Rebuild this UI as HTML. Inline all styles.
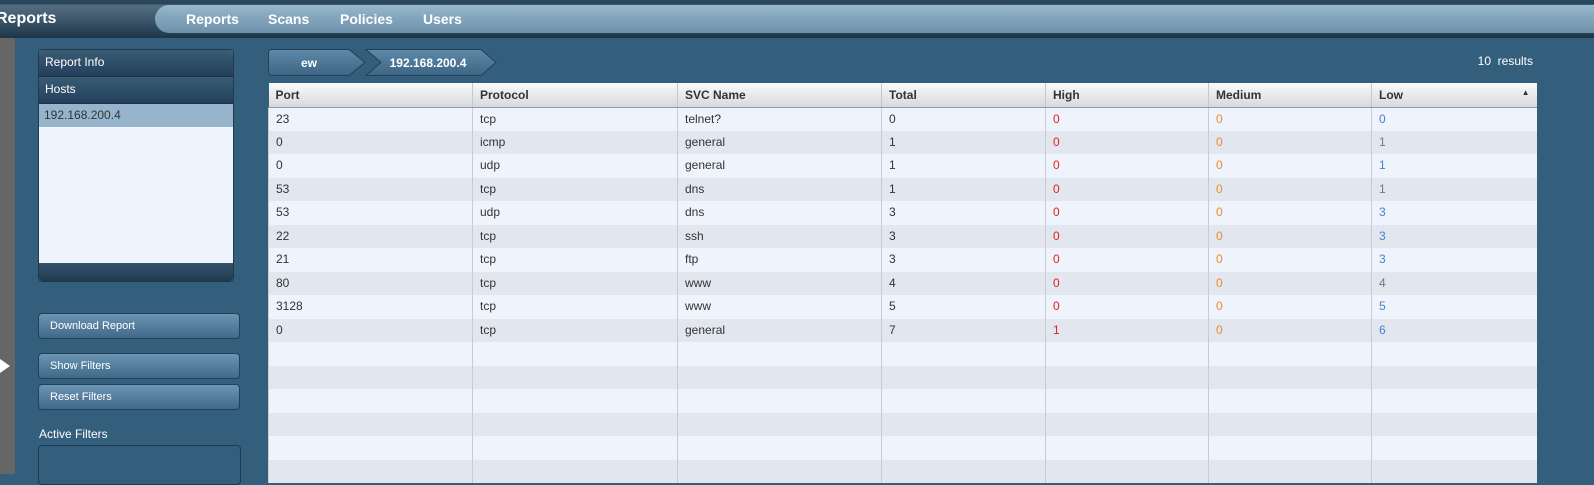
<!DOCTYPE html>
<html><head><style>
*{margin:0;padding:0;box-sizing:border-box}
body{width:1594px;height:474px;overflow:hidden;background:#335f7d;font-family:"Liberation Sans",sans-serif;position:relative}
.top{position:absolute;left:0;top:0;width:1594px;height:38px;background:linear-gradient(#2a465b 0,#2a465b 4px,#566e82 5px,#3c566b 20px,#243d50 34px,#1f3446 38px)}
.title{position:absolute;left:-4px;top:10px;color:#fff;font-weight:bold;font-size:16px}
.nav{position:absolute;left:155px;top:5px;width:1450px;height:28px;border-radius:15px 0 0 15px;background:linear-gradient(#97b7cc,#6d91aa)}
.nav span{position:absolute;top:6px;color:#fff;font-weight:bold;font-size:14px}
.strip{position:absolute;left:0;top:38px;width:15px;height:436px;background:#666}
.arrow{position:absolute;left:0;top:359px;width:0;height:0;border-top:7px solid transparent;border-bottom:7px solid transparent;border-left:10px solid #fff}
.panel{position:absolute;left:38px;top:49px;width:196px;height:233px;border:1px solid #1f3a4e;border-radius:4px;background:#eef3fc;overflow:hidden}
.ph{height:27px;background:linear-gradient(#3a5c75,#23405a);color:#fff;font-size:12px;padding:5px 6px;border-bottom:1px solid #1c3346}
.sel{height:23px;background:#96b5cd;color:#333;font-size:12px;padding:4px 5px}
.pf{position:absolute;left:0;bottom:0;width:100%;height:18px;background:linear-gradient(#33536b,#1f3a4e)}
.btn{position:absolute;left:38px;width:202px;height:26px;border:1px solid #234055;border-radius:4px;background:linear-gradient(#6b95b4,#41698a);color:#fff;font-size:11px;padding:6px 11px}
.af{position:absolute;left:39px;top:427px;color:#fff;font-size:12px}
.afb{position:absolute;left:38px;top:445px;width:203px;height:40px;border:1px solid #1f3a4e;border-radius:4px}
.res{position:absolute;right:61px;top:54px;color:#fff;font-size:12px}
table{position:absolute;left:268px;top:83px;width:1268px;border-collapse:collapse;table-layout:fixed;font-size:12px;color:#333}
th{height:24px;text-align:left;font-weight:bold;padding:0 7px;background:linear-gradient(#fafafa,#d6d9de);border-left:1px solid #c4c8cc;border-bottom:1px solid #8e9aa6;color:#333}
td{height:23.5px;padding:0 7px;border-left:1px solid #c8ccd0;vertical-align:top;padding-top:3px;line-height:16px}
tr:nth-child(even) td{background:#eef3fc}
tr:nth-child(odd) td{background:#e1e6ef}
.h{color:#d22}.m{color:#e98d2a}.l{color:#4a7fd0}.g{color:#6b7a8a}
</style></head><body>
<div class="top"><div class="title">Reports</div>
<div class="nav"><span style="left:31px">Reports</span><span style="left:113px">Scans</span><span style="left:185px">Policies</span><span style="left:268px">Users</span></div></div>
<div class="strip"></div><div class="arrow"></div>
<div class="panel"><div class="ph">Report Info</div><div class="ph" style="height:27px">Hosts</div><div class="sel">192.168.200.4</div><div class="pf"></div></div>
<div class="btn" style="top:313px">Download Report</div>
<div class="btn" style="top:353px">Show Filters</div>
<div class="btn" style="top:384px">Reset Filters</div>
<div class="af">Active Filters</div><div class="afb"></div>
<svg style="position:absolute;left:268px;top:49px" width="230" height="28">
<path d="M4 .5H81L97 13.5L81 26.5H4Q.5 26.5 .5 23V4Q.5 .5 4 .5Z" fill="url(#g)" stroke="#234055"/>
<path d="M98 .5H213L228 13.5L213 26.5H98L113 13.5Z" fill="url(#g)" stroke="#234055"/>
<defs><linearGradient id="g" x1="0" y1="0" x2="0" y2="1"><stop offset="0" stop-color="#5f89a8"/><stop offset="1" stop-color="#3d6586"/></linearGradient></defs>
<text x="41" y="18" fill="#fff" font-weight="bold" font-size="12" text-anchor="middle" font-family="Liberation Sans">ew</text>
<text x="160" y="18" fill="#fff" font-weight="bold" font-size="12" text-anchor="middle" font-family="Liberation Sans">192.168.200.4</text>
</svg>
<div class="res">10&nbsp; results</div>
<table>
<colgroup><col style="width:204px"><col style="width:205px"><col style="width:204px"><col style="width:164px"><col style="width:163px"><col style="width:163px"><col style="width:165px"></colgroup>
<tr><th style="border-left:none">Port</th><th>Protocol</th><th>SVC Name</th><th>Total</th><th>High</th><th>Medium</th><th>Low<span style="float:right;font-size:8px">▲</span></th></tr>
<tr><td>23</td><td>tcp</td><td>telnet?</td><td>0</td><td class="h">0</td><td class="m">0</td><td class="l">0</td></tr>
<tr><td>0</td><td>icmp</td><td>general</td><td>1</td><td class="h">0</td><td class="m">0</td><td class="g">1</td></tr>
<tr><td>0</td><td>udp</td><td>general</td><td>1</td><td class="h">0</td><td class="m">0</td><td class="l">1</td></tr>
<tr><td>53</td><td>tcp</td><td>dns</td><td>1</td><td class="h">0</td><td class="m">0</td><td class="g">1</td></tr>
<tr><td>53</td><td>udp</td><td>dns</td><td>3</td><td class="h">0</td><td class="m">0</td><td class="l">3</td></tr>
<tr><td>22</td><td>tcp</td><td>ssh</td><td>3</td><td class="h">0</td><td class="m">0</td><td class="l">3</td></tr>
<tr><td>21</td><td>tcp</td><td>ftp</td><td>3</td><td class="h">0</td><td class="m">0</td><td class="l">3</td></tr>
<tr><td>80</td><td>tcp</td><td>www</td><td>4</td><td class="h">0</td><td class="m">0</td><td class="g">4</td></tr>
<tr><td>3128</td><td>tcp</td><td>www</td><td>5</td><td class="h">0</td><td class="m">0</td><td class="l">5</td></tr>
<tr><td>0</td><td>tcp</td><td>general</td><td>7</td><td class="h">1</td><td class="m">0</td><td class="l">6</td></tr>
<tr><td></td><td></td><td></td><td></td><td></td><td></td><td></td></tr>
<tr><td></td><td></td><td></td><td></td><td></td><td></td><td></td></tr>
<tr><td></td><td></td><td></td><td></td><td></td><td></td><td></td></tr>
<tr><td></td><td></td><td></td><td></td><td></td><td></td><td></td></tr>
<tr><td></td><td></td><td></td><td></td><td></td><td></td><td></td></tr>
<tr><td></td><td></td><td></td><td></td><td></td><td></td><td></td></tr>
</table>
</body></html>
